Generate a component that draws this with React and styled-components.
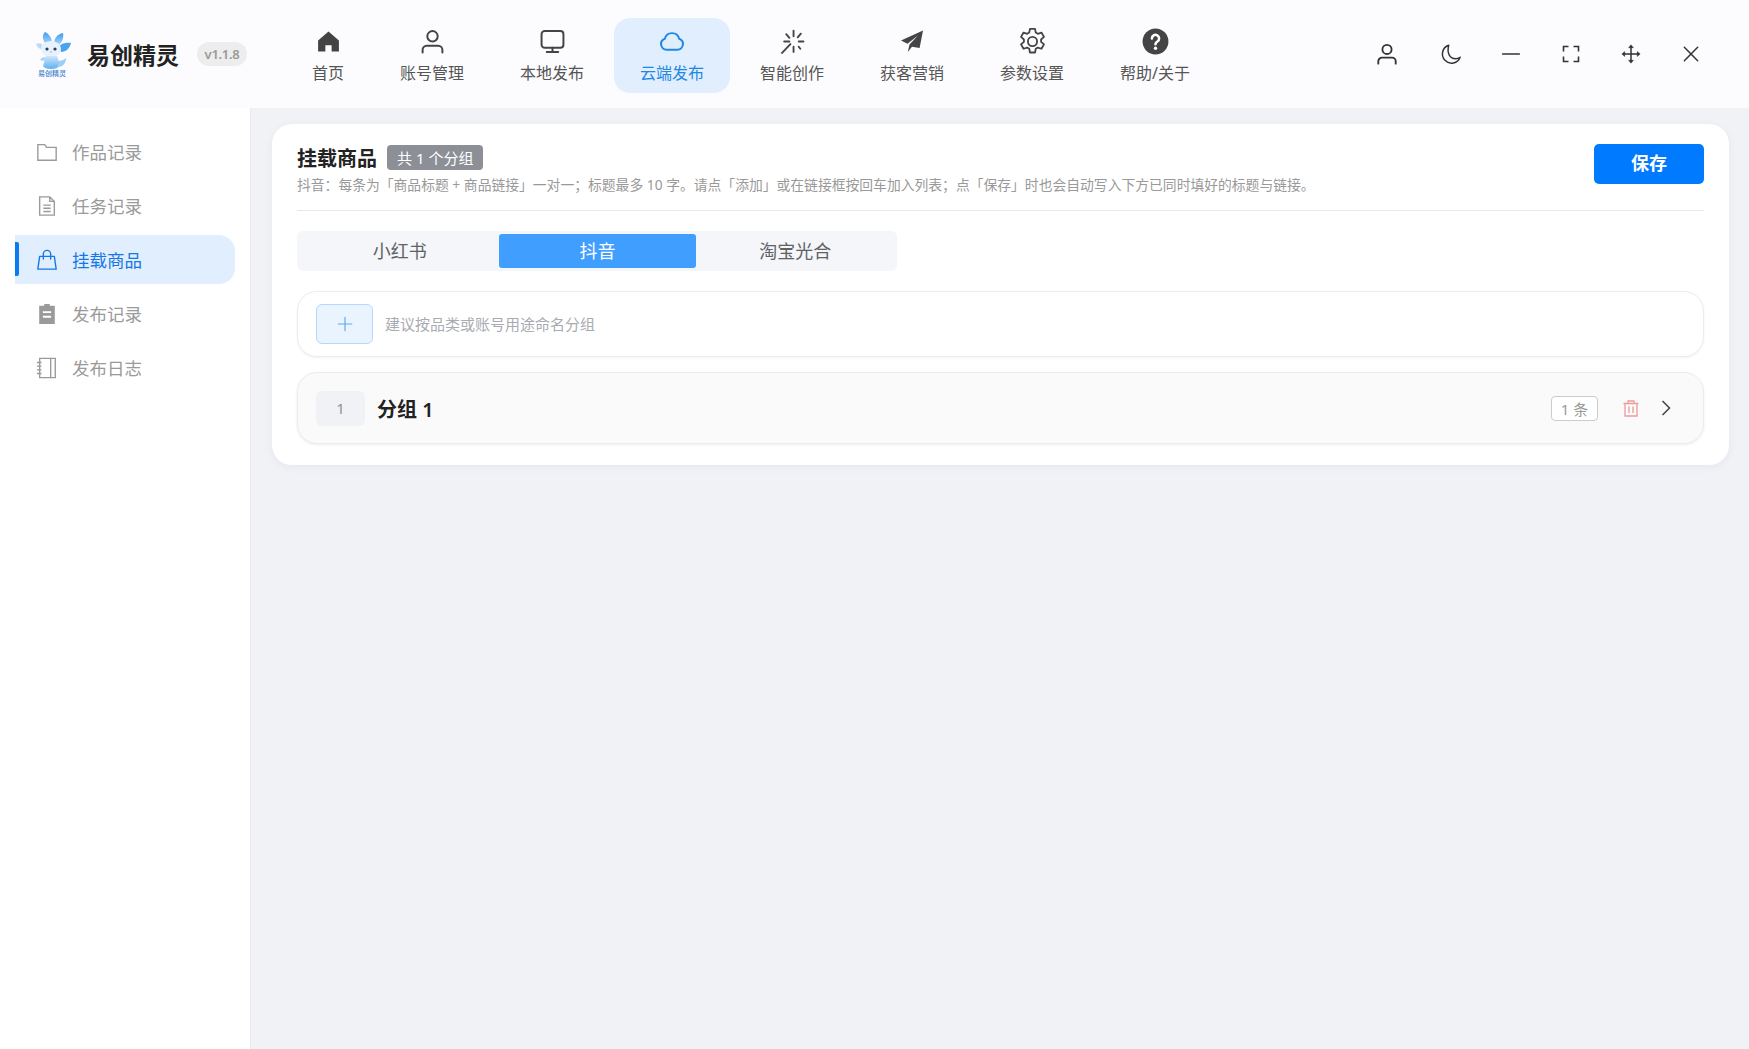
import React from 'react';
import styled, { createGlobalStyle } from 'styled-components';

const GlobalStyle = createGlobalStyle`
  * { box-sizing: border-box; }
  html, body { margin: 0; padding: 0; height: 100%; }
  body {
    background: #f1f2f6;
    font-family: "Noto Sans", "Noto Sans CJK SC", sans-serif;
    overflow: hidden;
  }
`;

const Page = styled.div`
  width: 1749px;
  height: 1049px;
  display: flex;
  flex-direction: column;
  background: #f1f2f6;
`;

const TopBar = styled.header`
  height: 108px;
  flex: none;
  display: flex;
  align-items: flex-start;
  background: #fcfcff;
`;

const Brand = styled.div`
  width: 286px;
  height: 108px;
  flex: none;
  display: flex;
  align-items: center;
  padding-left: 33px;
`;

const LogoBox = styled.div`
  width: 38px;
  height: 47px;
  display: flex;
  flex-direction: column;
  align-items: center;
`;

const LogoCaption = styled.span`
  font-size: 7px;
  line-height: 8px;
  color: #3f7fd0;
  white-space: nowrap;
  font-weight: 500;
`;

const BrandName = styled.span`
  margin-left: 16px;
  font-size: 23px;
  font-weight: 700;
  color: #222;
  white-space: nowrap;
`;

const Version = styled.span`
  margin-left: 18px;
  width: 50px;
  height: 24px;
  border-radius: 12px;
  background: #ededed;
  color: #999;
  font-size: 13px;
  letter-spacing: -0.3px;
  font-weight: 600;
  display: flex;
  align-items: center;
  justify-content: center;
  font-family: "Noto Sans", sans-serif;
`;

const NavList = styled.nav`
  display: flex;
  gap: 4px;
  padding-top: 18px;
`;

const NavItem = styled.div`
  height: 75px;
  padding: 10px 26px 0;
  border-radius: 16px;
  display: flex;
  flex-direction: column;
  align-items: center;
  background: ${(p) => (p.$active ? '#e1eefe' : 'transparent')};
  color: ${(p) => (p.$active ? '#1e88e5' : '#444')};
`;

const NavIcon = styled.span`
  height: 26px;
  display: flex;
  align-items: center;
  justify-content: center;
`;

const NavLabel = styled.span`
  margin-top: 7px;
  font-size: 16px;
  line-height: 24px;
  white-space: nowrap;
  color: ${(p) => (p.$active ? '#1e88e5' : '#555')};
`;

const WindowTools = styled.div`
  margin-left: auto;
  height: 108px;
  display: flex;
  align-items: center;
  padding-right: 28px;
`;

const ToolButton = styled.div`
  width: 60px;
  display: flex;
  justify-content: center;
  color: #333;

  &:first-child {
    margin-right: 4px;
  }
`;

const Body = styled.div`
  flex: 1;
  display: flex;
  min-height: 0;
`;

const Sidebar = styled.aside`
  width: 251px;
  flex: none;
  background: #fff;
  border-right: 1px solid #e9e9ee;
  padding: 19px 0 0 15px;
  display: flex;
  flex-direction: column;
  gap: 5px;
`;

const SideItem = styled.div`
  position: relative;
  width: 220px;
  height: 49px;
  display: flex;
  align-items: center;
  padding-left: 21px;
  gap: 14px;
  border-radius: 0 16px 16px 0;
  background: ${(p) => (p.$active ? '#e1eefe' : 'transparent')};
  color: ${(p) => (p.$active ? '#1677e6' : '#9a9a9a')};
  font-size: 17.5px;

  &::before {
    content: '';
    display: ${(p) => (p.$active ? 'block' : 'none')};
    position: absolute;
    left: 0;
    top: 7px;
    bottom: 8px;
    width: 4px;
    border-radius: 0 2px 2px 0;
    background: #0a7cf0;
  }
`;

const Main = styled.main`
  flex: 1;
  min-width: 0;
  padding: 16px 20px 0 21px;
`;

const Card = styled.section`
  background: #fff;
  border-radius: 20px;
  padding: 20px 25px 21px;
  box-shadow: 0 2px 10px rgba(30, 40, 70, 0.05);
`;

const CardHead = styled.div`
  display: flex;
  justify-content: space-between;
  align-items: flex-start;
  height: 67px;
  border-bottom: 1px solid #e8e8ea;
`;

const TitleRow = styled.div`
  display: flex;
  align-items: center;
  height: 25px;
  margin-top: 1px;
`;

const Title = styled.h2`
  margin: 0;
  font-size: 20px;
  font-weight: 700;
  color: #222;
`;

const CountBadge = styled.span`
  margin-left: 10px;
  height: 25px;
  padding: 0 10px 1px;
  border-radius: 4px;
  background: #8c8f96;
  color: #fff;
  font-size: 15px;
  display: flex;
  align-items: center;
`;

const Hint = styled.p`
  margin: 6px 0 0;
  font-size: 13.8px;
  line-height: 18px;
  color: #999;
  white-space: nowrap;
`;

const SaveButton = styled.button`
  width: 110px;
  height: 40px;
  padding: 0 0 4px;
  border: none;
  border-radius: 5px;
  background: #007aff;
  color: #fff;
  font-family: inherit;
  font-size: 18px;
  font-weight: 700;
`;

const Tabs = styled.div`
  margin-top: 20px;
  width: 600px;
  height: 40px;
  padding: 3px 3px 3px 4px;
  display: flex;
  border-radius: 6px;
  background: #f5f6f9;
`;

const Tab = styled.div`
  flex: 1;
  display: flex;
  align-items: center;
  justify-content: center;
  padding-bottom: 2px;
  border-radius: 3px;
  font-size: 18px;
  background: ${(p) => (p.$active ? '#409eff' : 'transparent')};
  color: ${(p) => (p.$active ? '#fff' : '#606266')};
`;

const AddRow = styled.div`
  margin-top: 20px;
  height: 66px;
  padding: 0 18px;
  display: flex;
  align-items: center;
  gap: 12px;
  background: #fff;
  border: 1px solid #ececee;
  border-radius: 20px;
  box-shadow: 0 1px 3px rgba(0, 0, 0, 0.05);
`;

const AddButton = styled.div`
  width: 57px;
  height: 40px;
  display: flex;
  align-items: center;
  justify-content: center;
  border: 1px solid #b3d8ff;
  border-radius: 6px;
  background: #e9f4ff;
  color: #5aa9ee;
`;

const Placeholder = styled.span`
  padding-bottom: 2px;
  font-size: 15px;
  color: #a8abb2;
`;

const GroupRow = styled.div`
  margin-top: 15px;
  height: 72px;
  padding: 0 32px 0 18px;
  display: flex;
  align-items: center;
  background: #fafafa;
  border: 1px solid #ececee;
  border-radius: 20px;
  box-shadow: 0 1px 3px rgba(0, 0, 0, 0.07);
`;

const GroupIndex = styled.span`
  width: 49px;
  height: 35px;
  display: flex;
  align-items: center;
  justify-content: center;
  border-radius: 6px;
  background: #f1f2f5;
  color: #909399;
  font-size: 15px;
`;

const GroupName = styled.span`
  margin-left: 12px;
  font-size: 20px;
  font-weight: 600;
  color: #222;
`;

const CountTag = styled.span`
  margin-left: auto;
  width: 47px;
  height: 25px;
  display: flex;
  align-items: center;
  justify-content: center;
  border: 1px solid #ccc;
  border-radius: 4px;
  background: #fff;
  color: #999;
  font-size: 15px;
`;

const TrashWrap = styled.span`
  margin-left: 25px;
  display: flex;
  color: #ef9a9a;
`;

const ChevronWrap = styled.span`
  margin-left: 22px;
  display: flex;
  color: #444;
`;

// 线条图标统一用这个外壳
const Ico = ({ size = 24, sw = 2, children, fill = 'none' }) => (
  <svg width={size} height={size} viewBox="0 0 24 24" fill={fill} stroke="currentColor" strokeWidth={sw} strokeLinecap="round" strokeLinejoin="round">
    {children}
  </svg>
);

const HomeIcon = () => (
  <svg width="25" height="25" viewBox="0 0 24 24" fill="currentColor">
    <path d="M12 2.500 22 11v10.500H15V15.500H9v6H2V11z" />
  </svg>
);
const UserIcon = ({ size = 25, sw = 1.9 }) => (
  <Ico size={size} sw={sw}>
    <circle cx="12" cy="7" r="5" />
    <path d="M2.500 22.500v-2.500a4 4 0 0 1 4-4h11a4 4 0 0 1 4 4v2.500" />
  </Ico>
);
const MonitorIcon = () => (
  <Ico size={25} sw={1.9}>
    <rect x="1.500" y="2" width="21" height="16" rx="3" />
    <path d="M12 18v4M6.500 22h11" />
  </Ico>
);
const CloudIcon = () => (
  <Ico size={26} sw={1.8}>
    <path d="M7 20a5.200 5.200 0 0 1-1.600-10.100 6.800 6.800 0 0 1 13.200 0A5.200 5.200 0 0 1 17 20z" />
  </Ico>
);
const MagicIcon = () => (
  <Ico size={25} sw={1.8}>
    <path d="M13 1.500v5.500M13 17v5M20 4.500l-3 3.500M22.500 12H18M18 17l1.500 2M4 12h5M6 5l3 3.500M2 23l8-8.500" />
  </Ico>
);
const PlaneIcon = () => (
  <svg width="24" height="24" viewBox="0 0 24 24" fill="currentColor">
    <path d="M23 1.500 1 11.500l6.500 3.200L18 6.500 9.500 15.500 7.800 23l4.200-5.200 7.600 1.200z" />
  </svg>
);
const GearIcon = () => (
  <Ico size={29} sw={1.5}>
    <path d="M9.900 1.500h4.200l.6 3.100 1.700 1 3-1 2.100 3.600-2.400 2.100v2l2.400 2.100-2.100 3.600-3-1-1.700 1-.6 3.100H9.900l-.6-3.100-1.700-1-3 1-2.100-3.600 2.400-2.100v-2L2.500 8.200l2.100-3.600 3 1 1.700-1z" />
    <circle cx="12" cy="12" r="3.800" />
  </Ico>
);
const HelpIcon = () => (
  <svg width="27" height="27" viewBox="0 0 24 24">
    <circle cx="12" cy="12" r="11.500" fill="currentColor" />
    <path d="M8.800 9.300a3.200 3.200 0 1 1 4.900 2.700c-1.100.7-1.700 1.300-1.700 2.500" fill="none" stroke="#fff" strokeWidth="2.300" strokeLinecap="round" />
    <circle cx="12" cy="18" r="1.500" fill="#fff" />
  </svg>
);
const MoonIcon = () => (
  <Ico size={22} sw={1.6}>
    <path d="M9.500 2.500A10 10 0 1 0 22 15.500c-1.200 1-3 1.600-5 1.600-6 0-9.800-5.600-7.500-14.600z" />
  </Ico>
);
const MinusIcon = () => (
  <Ico size={20} sw={1.9}>
    <path d="M2 12h20" />
  </Ico>
);
const FullIcon = () => (
  <svg width="20" height="20" viewBox="0 0 24 24" fill="none" stroke="currentColor" strokeWidth="1.900">
    <path d="M9 3H3v6M15 3h6v6M9 21H3v-6M15 21h6v-6" />
  </svg>
);
const MoveIcon = () => (
  <svg width="20" height="20" viewBox="0 0 24 24" fill="currentColor" stroke="currentColor" strokeWidth="1.800">
    <path d="M12 3v18M3 12h18" fill="none" />
    <path d="M12 1l3 3.500H9zM12 23l3-3.500H9zM1 12l3.500-3v6zM23 12l-3.500-3v6z" strokeWidth="0.500" />
  </svg>
);
const CloseIcon = () => (
  <Ico size={20} sw={1.8}>
    <path d="M4 4l16 16M20 4 4 20" />
  </Ico>
);
const FolderIcon = () => (
  <Ico size={22} sw={1.5}>
    <path d="M2 4h7.500l2 3H22v14H2z" strokeLinecap="butt" strokeLinejoin="miter" />
  </Ico>
);
const DocIcon = () => (
  <Ico size={22} sw={1.5}>
    <path d="M4 2h11l5 5v15H4zM15 2v5h5M8 11h8M8 14.500h8M8 18h8" strokeLinecap="butt" strokeLinejoin="miter" />
  </Ico>
);
const BagIcon = () => (
  <Ico size={22} sw={1.5}>
    <path d="M4 8h16l2 14H2zM8 11V5.500a4 4 0 0 1 8 0V11" />
  </Ico>
);
const ClipIcon = () => (
  <svg width="22" height="22" viewBox="0 0 24 24">
    <path fill="currentColor" d="M9 1h6v2h5.500v20H3.500V3H9z" />
    <path stroke="#fff" strokeWidth="2" d="M7.500 10h9M7.500 15h9" />
  </svg>
);
const NoteIcon = () => (
  <Ico size={22} sw={1.5}>
    <path d="M4 1.500h17v21H4zM16 1.500v21M1 6h5M1 10h5M1 14h5M1 18h5" strokeLinecap="butt" strokeLinejoin="miter" />
  </Ico>
);
const PlusIcon = () => (
  <Ico size={18} sw={1.5}>
    <path d="M12 3v18M3 12h18" />
  </Ico>
);
const TrashIcon = () => (
  <svg width="16" height="17" viewBox="0 0 16 17" fill="none" stroke="currentColor" strokeWidth="1.300">
    <path d="M.5 3.500h15M5 3.500V1h6v2.500M2 3.500V16h12V3.500M6 6.500v6.500M10 6.500v6.500" />
  </svg>
);
const ChevronIcon = () => (
  <svg width="10" height="16" viewBox="0 0 10 16" fill="none" stroke="currentColor" strokeWidth="1.500">
    <path d="M1.500 1 8.500 8 1.500 15" />
  </svg>
);

const LogoMark = () => (
  <svg width="38" height="39" viewBox="0 0 38 39">
    <defs>
      <linearGradient id="wing" x1="0" y1="0" x2="0" y2="1">
        <stop offset="0" stopColor="#3f9df0" />
        <stop offset="1" stopColor="#a9d6f8" />
      </linearGradient>
      <linearGradient id="belly" x1="0" y1="0" x2="0" y2="1">
        <stop offset="0" stopColor="#cfe6fb" />
        <stop offset="1" stopColor="#5fb0f2" />
      </linearGradient>
    </defs>
    <path d="M13 13C9 9 9 4 12 1c4 2 7 6 7 11z" fill="url(#wing)" />
    <path d="M21 12c0-5 4-9 9-10 1 5-1 9-4 12z" fill="url(#wing)" />
    <path d="M26 15c3-3 8-4 12-3-1 5-5 9-10 9z" fill="#4aa3ef" />
    <path d="M9 13c-2-1-4-1-6 0 1 3 3 5 7 6z" fill="#bcdcf6" />
    <ellipse cx="18" cy="18" rx="10" ry="8" fill="#e8f2fc" />
    <circle cx="14" cy="18" r="1.600" fill="#1d3f72" />
    <circle cx="22" cy="18" r="1.600" fill="#1d3f72" />
    <circle cx="18" cy="21" r="0.700" fill="#d9667f" />
    <path d="M13 25h11l3 9c-2 3-5 4-9 4s-7-1-8-3z" fill="url(#belly)" />
    <path d="M25 30c3 0 6-1 8-3 0 5-3 9-8 9z" fill="#9ccff5" />
    <path d="M12 26c-2 0-4 1-5 3 2 1 4 1 6 0z" fill="#a9d6f8" />
  </svg>
);

const navItems = [
  { label: '首页', icon: <HomeIcon /> },
  { label: '账号管理', icon: <UserIcon /> },
  { label: '本地发布', icon: <MonitorIcon /> },
  { label: '云端发布', icon: <CloudIcon />, active: true },
  { label: '智能创作', icon: <MagicIcon /> },
  { label: '获客营销', icon: <PlaneIcon /> },
  { label: '参数设置', icon: <GearIcon /> },
  { label: '帮助/关于', icon: <HelpIcon /> },
];

const sideItems = [
  { label: '作品记录', icon: <FolderIcon /> },
  { label: '任务记录', icon: <DocIcon /> },
  { label: '挂载商品', icon: <BagIcon />, active: true },
  { label: '发布记录', icon: <ClipIcon /> },
  { label: '发布日志', icon: <NoteIcon /> },
];

const App = () => (
  <Page>
    <GlobalStyle />
    <TopBar>
      <Brand>
        <LogoBox>
          <LogoMark />
          <LogoCaption>易创精灵</LogoCaption>
        </LogoBox>
        <BrandName>易创精灵</BrandName>
        <Version>v1.1.8</Version>
      </Brand>
      <NavList>
        {navItems.map((item) => (
          <NavItem key={item.label} $active={item.active}>
            <NavIcon>{item.icon}</NavIcon>
            <NavLabel $active={item.active}>{item.label}</NavLabel>
          </NavItem>
        ))}
      </NavList>
      <WindowTools>
        <ToolButton><UserIcon size={22} sw={2} /></ToolButton>
        <ToolButton><MoonIcon /></ToolButton>
        <ToolButton><MinusIcon /></ToolButton>
        <ToolButton><FullIcon /></ToolButton>
        <ToolButton><MoveIcon /></ToolButton>
        <ToolButton><CloseIcon /></ToolButton>
      </WindowTools>
    </TopBar>
    <Body>
      <Sidebar>
        {sideItems.map((item) => (
          <SideItem key={item.label} $active={item.active}>
            {item.icon}
            {item.label}
          </SideItem>
        ))}
      </Sidebar>
      <Main>
        <Card>
          <CardHead>
            <div>
              <TitleRow>
                <Title>挂载商品</Title>
                <CountBadge>共 1 个分组</CountBadge>
              </TitleRow>
              <Hint>抖音：每条为「商品标题 + 商品链接」一对一；标题最多 10 字。请点「添加」或在链接框按回车加入列表；点「保存」时也会自动写入下方已同时填好的标题与链接。</Hint>
            </div>
            <SaveButton>保存</SaveButton>
          </CardHead>
          <Tabs>
            <Tab>小红书</Tab>
            <Tab $active>抖音</Tab>
            <Tab>淘宝光合</Tab>
          </Tabs>
          <AddRow>
            <AddButton><PlusIcon /></AddButton>
            <Placeholder>建议按品类或账号用途命名分组</Placeholder>
          </AddRow>
          <GroupRow>
            <GroupIndex>1</GroupIndex>
            <GroupName>分组 1</GroupName>
            <CountTag>1 条</CountTag>
            <TrashWrap><TrashIcon /></TrashWrap>
            <ChevronWrap><ChevronIcon /></ChevronWrap>
          </GroupRow>
        </Card>
      </Main>
    </Body>
  </Page>
);

export default App;
